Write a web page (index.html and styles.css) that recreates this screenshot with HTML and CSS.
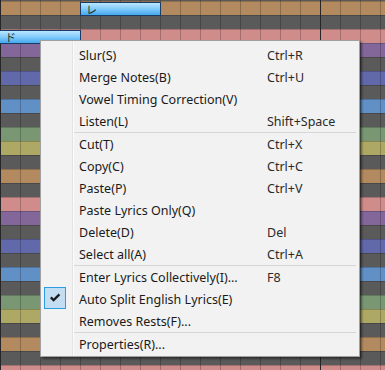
FILE: index.html
```html
<!DOCTYPE html>
<html>
<head>
<meta charset="utf-8">
<link rel="stylesheet" href="styles.css">
</head>
<body>
<div class="roll">
  <div class="note note-re">レ</div>
  <div class="note note-do">ド</div>
  <div class="menu">
    <div class="item"><span class="gutter"></span><span class="label">Slur(S)</span><span class="key">Ctrl+R</span></div>
    <div class="item"><span class="gutter"></span><span class="label">Merge Notes(B)</span><span class="key">Ctrl+U</span></div>
    <div class="item"><span class="gutter"></span><span class="label">Vowel Timing Correction(V)</span><span class="key"></span></div>
    <div class="item"><span class="gutter"></span><span class="label">Listen(L)</span><span class="key">Shift+Space</span></div>
    <div class="sep"></div>
    <div class="item"><span class="gutter"></span><span class="label">Cut(T)</span><span class="key">Ctrl+X</span></div>
    <div class="item"><span class="gutter"></span><span class="label">Copy(C)</span><span class="key">Ctrl+C</span></div>
    <div class="item"><span class="gutter"></span><span class="label">Paste(P)</span><span class="key">Ctrl+V</span></div>
    <div class="item"><span class="gutter"></span><span class="label">Paste Lyrics Only(Q)</span><span class="key"></span></div>
    <div class="item"><span class="gutter"></span><span class="label">Delete(D)</span><span class="key">Del</span></div>
    <div class="item"><span class="gutter"></span><span class="label">Select all(A)</span><span class="key">Ctrl+A</span></div>
    <div class="sep"></div>
    <div class="item"><span class="gutter"></span><span class="label">Enter Lyrics Collectively(I)...</span><span class="key">F8</span></div>
    <div class="item"><span class="gutter"><span class="check"><svg width="12" height="10" viewBox="0 0 12 10"><path d="M1 5.2 L2.6 3.6 L4.6 5.6 L9.6 0.6 L11.2 2.2 L4.6 8.8 Z" fill="#1a1a1a"/></svg></span></span><span class="label">Auto Split English Lyrics(E)</span><span class="key"></span></div>
    <div class="item"><span class="gutter"></span><span class="label">Removes Rests(F)...</span><span class="key"></span></div>
    <div class="sep"></div>
    <div class="item"><span class="gutter"></span><span class="label">Properties(R)...</span><span class="key"></span></div>
  </div>
</div>
</body>
</html>
```
FILE: styles.css
```css
html, body {
  margin: 0;
  padding: 0;
}
body {
  width: 385px;
  height: 370px;
  overflow: hidden;
  background: #5a5a5a;
}
.roll {
  position: relative;
  width: 385px;
  height: 370px;
  overflow: hidden;
  background-image:
    linear-gradient(to right, #262626 0 1px, transparent 1px 320px, #262626 320px 321px, transparent 321px),
    repeating-linear-gradient(to right, rgba(0,0,0,0.22) 0 1px, transparent 1px 20px),
    repeating-linear-gradient(to bottom, rgba(0,0,0,0.2) 0 1px, transparent 1px 14px),
    linear-gradient(to bottom,
      #b3895f 0 14px,
      #5a5a5a 14px 28px,
      #cf8c8b 28px 42px,
      #83679b 42px 56px,
      #5a5a5a 56px 70px,
      #6169aa 70px 84px,
      #5a5a5a 84px 98px,
      #6190c7 98px 112px,
      #5a5a5a 112px 126px,
      #799773 126px 140px,
      #ada864 140px 154px,
      #5a5a5a 154px 168px);
  background-size: auto, auto, auto, 100% 168px;
  background-position: 0 0, 0 0, 0 1px, 0 1px;
}
.note {
  position: absolute;
  height: 12px;
  border: 1px solid #1b3c66;
  background: linear-gradient(to bottom, #b9e6ff 0%, #86cdfb 45%, #45a9ee 100%);
  font-family: "Noto Sans CJK JP", "Noto Sans", sans-serif;
  font-size: 11px;
  line-height: 12px;
  color: #26321f;
  padding-left: 5px;
  box-sizing: content-box;
}
.note-re {
  left: 80px;
  top: 2px;
  width: 74px;
}
.note-do {
  left: -1px;
  top: 30px;
  width: 75px;
}
.menu {
  position: absolute;
  left: 40px;
  top: 40px;
  width: 318px;
  padding: 3px 0 1px;
  border: 1px solid #a0a0a0;
  background-color: #f2f2f2;
  background-image: linear-gradient(to right, transparent 31px, #e3e3e3 31px 32px, #fcfcfc 32px 33px, transparent 33px);
  box-shadow: 2px 2px 2px rgba(0,0,0,0.45);
  font-family: "Noto Sans", "Open Sans", sans-serif;
  font-size: 12.5px;
  color: #1a1a1a;
}
.item {
  display: flex;
  align-items: center;
  height: 22px;
}
.gutter {
  width: 38px;
  height: 22px;
  display: flex;
  align-items: center;
}
.label {
  width: 188px;
  white-space: nowrap;
}
.key {
  flex: 1;
  white-space: nowrap;
  color: #2a2a2a;
}
.check {
  margin-left: 3px;
  margin-top: -2px;
  width: 20px;
  height: 20px;
  border: 1px solid #2a9ee0;
  background: #c3ddf2;
  display: flex;
  align-items: center;
  justify-content: center;
}
.sep {
  height: 1px;
  margin: 0 3px 0 33px;
  background: #d6d6d6;
}
```
